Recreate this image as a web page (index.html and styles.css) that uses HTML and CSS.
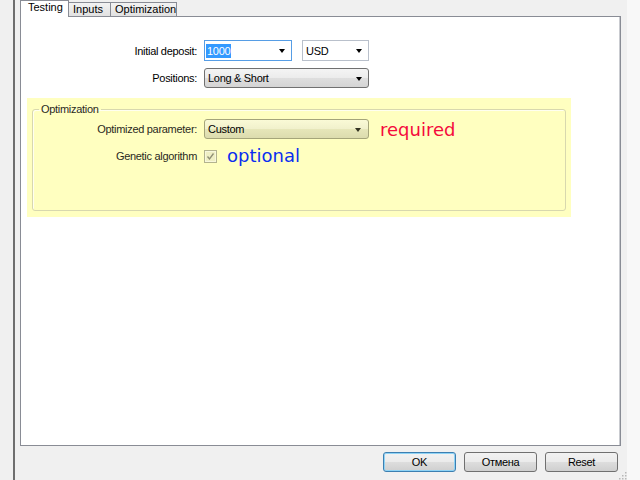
FILE: index.html
```html
<!DOCTYPE html>
<html>
<head>
<meta charset="utf-8">
<link rel="stylesheet" href="styles.css">
</head>
<body>
<div class="window">
  <div class="gutter"></div>
  <div class="splitter"></div>
  <div class="main">
    <div class="tabs">
      <div class="tab tab-active">Testing</div>
      <div class="tab">Inputs</div>
      <div class="tab">Optimization</div>
    </div>
    <div class="panel">
      <div class="row">
        <div class="label">Initial deposit:</div>
        <div class="combo combo-edit combo-focus w88">
          <span class="sel">1000</span>
          <span class="arrow"></span>
        </div>
        <div class="combo combo-edit w67 ml10">
          <span class="val">USD</span>
          <span class="arrow"></span>
        </div>
      </div>
      <div class="row mt7">
        <div class="label">Positions:</div>
        <div class="combo combo-btn w165">
          <span class="val">Long &amp; Short</span>
          <span class="arrow"></span>
        </div>
      </div>
      <div class="highlight">
        <fieldset class="group">
          <legend>Optimization</legend>
          <div class="row grow mt3">
            <div class="label glabel">Optimized parameter:</div>
            <div class="combo combo-btn combo-yellow w165">
              <span class="val">Custom</span>
              <span class="arrow"></span>
            </div>
            <span class="note required">required</span>
          </div>
          <div class="row grow mt10">
            <div class="label glabel">Genetic algorithm</div>
            <svg class="check" width="13" height="13" viewBox="0 0 13 13">
              <rect x="0.5" y="0.5" width="12" height="12" fill="#efefc4" stroke="#b3b38e"/>
              <rect x="1.5" y="1.5" width="10" height="10" fill="none" stroke="#f8f8dc"/>
              <path d="M3.5 6.5 L5.5 9 L9.5 3.5" fill="none" stroke="#8e8e74" stroke-width="1.3"/>
            </svg>
            <span class="note optional">optional</span>
          </div>
        </fieldset>
      </div>
    </div>
    <div class="buttons">
      <div class="btn btn-default">OK</div>
      <div class="btn">Отмена</div>
      <div class="btn">Reset</div>
      <svg class="grip" width="10" height="10" viewBox="0 0 10 10">
        <rect x="8" y="2" width="1.5" height="1.5" fill="#b8b8b8"/>
        <rect x="5" y="5" width="1.5" height="1.5" fill="#b8b8b8"/>
        <rect x="8" y="5" width="1.5" height="1.5" fill="#b8b8b8"/>
        <rect x="2" y="8" width="1.5" height="1.5" fill="#b8b8b8"/>
        <rect x="5" y="8" width="1.5" height="1.5" fill="#b8b8b8"/>
        <rect x="8" y="8" width="1.5" height="1.5" fill="#b8b8b8"/>
      </svg>
    </div>
  </div>
  <div class="edge"></div>
</div>
</body>
</html>
```
FILE: styles.css
```css
* { box-sizing: border-box; }
html, body { margin: 0; padding: 0; }
body {
  background: #f0f0f0;
  font-family: "Liberation Sans", Arial, sans-serif;
  font-size: 11px;
  letter-spacing: -0.3px;
  color: #000;
}
.window {
  display: flex;
  width: 640px;
  height: 480px;
  overflow: hidden;
}
.gutter { width: 13px; background: #f0f0f0; }
.splitter { width: 2px; background: #6e6e6e; }
.edge { width: 13px; background: #f8f8f8; }
.main {
  width: 612px;
  display: flex;
  flex-direction: column;
  padding-left: 5px;
}
.tabs {
  height: 16px;
  display: flex;
  align-items: flex-end;
}
.tab {
  height: 14px;
  padding: 0 4px;
  line-height: 12px;
  border: 1px solid #898c95;
  border-bottom: none;
  border-left: none;
  background: linear-gradient(#f3f3f3, #e1e1e1);
  color: #000;
  letter-spacing: 0;
}
.tab-active {
  height: 17px;
  margin-bottom: -1px;
  position: relative;
  z-index: 1;
  width: 49px;
  padding: 0 0 0 7px;
  line-height: 12px;
  background: #fff;
  border-left: 1px solid #898c95;
  border-right: 1px solid #898c95;
}
.tab:nth-child(2) { width: 42px; }
.tab:nth-child(3) { width: 66px; }
.panel {
  width: 601px;
  height: 430px;
  background: #fff;
  border: 1px solid #898c95;
  box-shadow: inset -1px 0 #c9cbd0;
  padding-top: 23px;
  display: flex;
  flex-direction: column;
}
.row {
  display: flex;
  align-items: center;
}
.mt7 { margin-top: 7px; }
.mt3 { margin-top: 3px; }
.mt10 { margin-top: 10px; }
.ml10 { margin-left: 10px; }
.label {
  width: 176px;
  text-align: right;
  margin-right: 7px;
  white-space: nowrap;
}
.glabel {
  width: 164px;
  color: #2a2a22;
}
.combo {
  position: relative;
  display: flex;
  align-items: center;
  height: 21px;
}
.w88 { width: 88px; }
.w67 { width: 67px; }
.w165 { width: 165px; height: 20px; }
.combo-edit {
  background: #fff;
  border: 1px solid #b9c0cb;
}
.combo-focus {
  border-color: #569de5;
}
.combo-btn {
  border: 1px solid #707070;
  border-radius: 3px;
  background: linear-gradient(#f4f4f4 0%, #ececec 48%, #dedede 52%, #d4d4d4 100%);
}
.combo-yellow {
  border-color: #a5a57a;
  background: linear-gradient(#fafad6 0%, #f1f1cc 48%, #e6e6b9 52%, #dcdcae 100%);
}
.sel {
  margin-left: 1px;
  background: #3399ff;
  color: #fff;
  padding: 0 1px;
  line-height: 14px;
}
.val {
  margin-left: 3px;
}
.arrow {
  position: absolute;
  right: 6px;
  top: 8px;
  width: 0;
  height: 0;
  border-left: 3.5px solid transparent;
  border-right: 3.5px solid transparent;
  border-top: 4px solid #000;
}
.combo-yellow .arrow { border-top-color: #333322; right: 7px; }
.highlight {
  margin: 10px 0 0 6px;
  width: 544px;
  height: 119px;
  background: #ffffc0;
  padding: 5px 5px 6px 5px;
  display: flex;
  flex-direction: column;
}
.group {
  flex: 1;
  margin: 0;
  padding: 0;
  border: 1px solid #d8d8ae;
  border-radius: 3px;
  box-shadow: inset 1px 1px #fffff0;
  min-width: 0;
}
.group legend {
  margin-left: 6px;
  padding: 0 2px;
  color: #2a2a22;
  line-height: 13px;
}
.check {
  display: block;
  margin-left: 0;
  flex: none;
}
.note {
  font-family: "DejaVu Sans", Verdana, sans-serif;
  font-size: 18px;
  line-height: 14px;
  letter-spacing: 0;
}
.required {
  color: #f50a3c;
  margin-left: 11px;
  margin-top: 1px;
}
.optional {
  color: #0a2ef0;
  margin-left: 10px;
  margin-top: 0;
}
.buttons {
  position: relative;
  flex: 1;
  display: flex;
  justify-content: flex-end;
  align-items: flex-start;
  gap: 8px;
  padding: 6px 9px 0 0;
}
.btn {
  width: 73px;
  height: 20px;
  border: 1px solid #707070;
  border-radius: 3px;
  background: linear-gradient(#f2f2f2 0%, #ebebeb 48%, #dddddd 52%, #cfcfcf 100%);
  display: flex;
  align-items: center;
  justify-content: center;
}
.btn-default {
  border-color: #3c7fb1;
  box-shadow: inset 0 0 0 1px #8fd3f5;
}
.grip {
  position: absolute;
  right: 0;
  bottom: 0;
}
```
